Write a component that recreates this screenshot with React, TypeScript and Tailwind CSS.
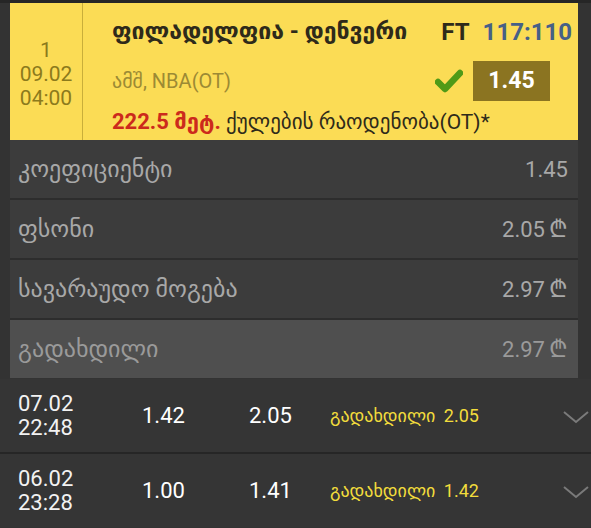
import React from "react";

const FONT = { fontFamily: "Roboto, 'DejaVu Sans', sans-serif" };

type InfoRow = { label: string; value: string; lari?: boolean; highlight?: boolean };

const INFO: InfoRow[] = [
  { label: "კოეფიციენტი", value: "1.45" },
  { label: "ფსონი", value: "2.05", lari: true },
  { label: "სავარაუდო მოგება", value: "2.97", lari: true },
  { label: "გადახდილი", value: "2.97", lari: true, highlight: true },
];

const HISTORY = [
  { date: "07.02", time: "22:48", a: "1.42", b: "2.05", paid: "2.05" },
  { date: "06.02", time: "23:28", a: "1.00", b: "1.41", paid: "1.42" },
];

export default function App() {
  return (
    <div className="w-[591px] h-[528px] bg-[#333333] overflow-hidden" style={FONT}>
      <div className="h-[3px] bg-[#262626]" />
      <div className="ml-[10px] mr-[13px]">
        {/* yellow ticket header */}
        <div className="h-[137px] bg-[#fbdc55] flex">
          <div className="w-[73px] border-r border-[#c9ae3a] flex flex-col items-center justify-center pt-[5px] text-[#8c7a1c] text-[21px] leading-[24px]">
            <span>1</span>
            <span>09.02</span>
            <span>04:00</span>
          </div>
          <div className="flex-1 pl-[29px] pr-[6px] pt-[14px]">
            <div className="flex items-center h-[30px]">
              <span className="flex-1 text-[23px] font-bold text-[#2e2a1a] whitespace-nowrap">
                ფილადელფია - დენვერი
              </span>
              <span className="text-[24px] font-bold text-[#2e2a1a] mr-[13px]">FT</span>
              <span className="text-[24px] font-bold text-[#466087]">117:110</span>
            </div>
            <div className="flex items-center h-[40px] mt-[14px]">
              <span className="flex-1 text-[20px] text-[#9c8a34]">ამშ, NBA(OT)</span>
              <svg width="28" height="24" viewBox="0 0 28 24" className="mr-[10px]">
                <path d="M3 13 L10 20 L25 4" fill="none" stroke="#4f9a17" strokeWidth="6.5" strokeLinecap="round" strokeLinejoin="round" />
              </svg>
              <span className="w-[77px] h-[40px] bg-[#8b7421] text-white font-bold text-[23px] flex items-center justify-center mr-[22px]">
                1.45
              </span>
            </div>
            <div className="mt-[4px] text-[21px] text-[#2e2a1a] whitespace-nowrap">
              <span className="font-bold text-[22px] text-[#cc2a1c]">222.5 მეტ.</span>{" "}
              ქულების რაოდენობა(OT)*
            </div>
          </div>
        </div>

        {/* info rows */}
        <div className="bg-[#2d2d2d] flex flex-col gap-[2px]">
          {INFO.map((r, i) => (
            <div
              key={i}
              className={`h-[58px] flex items-center justify-between pl-[8px] pr-[10px] ${
                r.highlight ? "bg-[#4f4f4f] text-[#9a9a9a]" : "bg-[#3c3c3c] text-[#a8a8a8]"
              }`}
            >
              <span className="text-[24px]">{r.label}</span>
              <span className="text-[22px] flex items-center">
                {r.value}
                {r.lari && <span className="ml-[4px] text-[24px]">₾</span>}
              </span>
            </div>
          ))}
        </div>
      </div>

      {/* history */}
      <div className="mt-[1px] flex flex-col gap-[2px] bg-[#262626]">
        {HISTORY.map((h, i) => (
          <div key={i} className="h-[73px] bg-[#353535] flex items-center text-white">
            <div className="w-[124px] pl-[18px] text-[22px] leading-[24px] text-[#f2f2f2]">
              <div>{h.date}</div>
              <div>{h.time}</div>
            </div>
            <div className="w-[125px] text-[22px] pl-[18px]">{h.a}</div>
            <div className="w-[81px] text-[22px]">{h.b}</div>
            <div className="flex-1 text-[18px] text-[#f2dc3c] whitespace-nowrap">
              გადახდილი <span className="ml-[4px]">{h.paid}</span>
            </div>
            <svg width="28" height="16" viewBox="0 0 28 16" className="mr-[1px] mt-[2px]">
              <path d="M2 3 L14 13 L26 3" fill="none" stroke="#7a7a7a" strokeWidth="2" />
            </svg>
          </div>
        ))}
      </div>
    </div>
  );
}
